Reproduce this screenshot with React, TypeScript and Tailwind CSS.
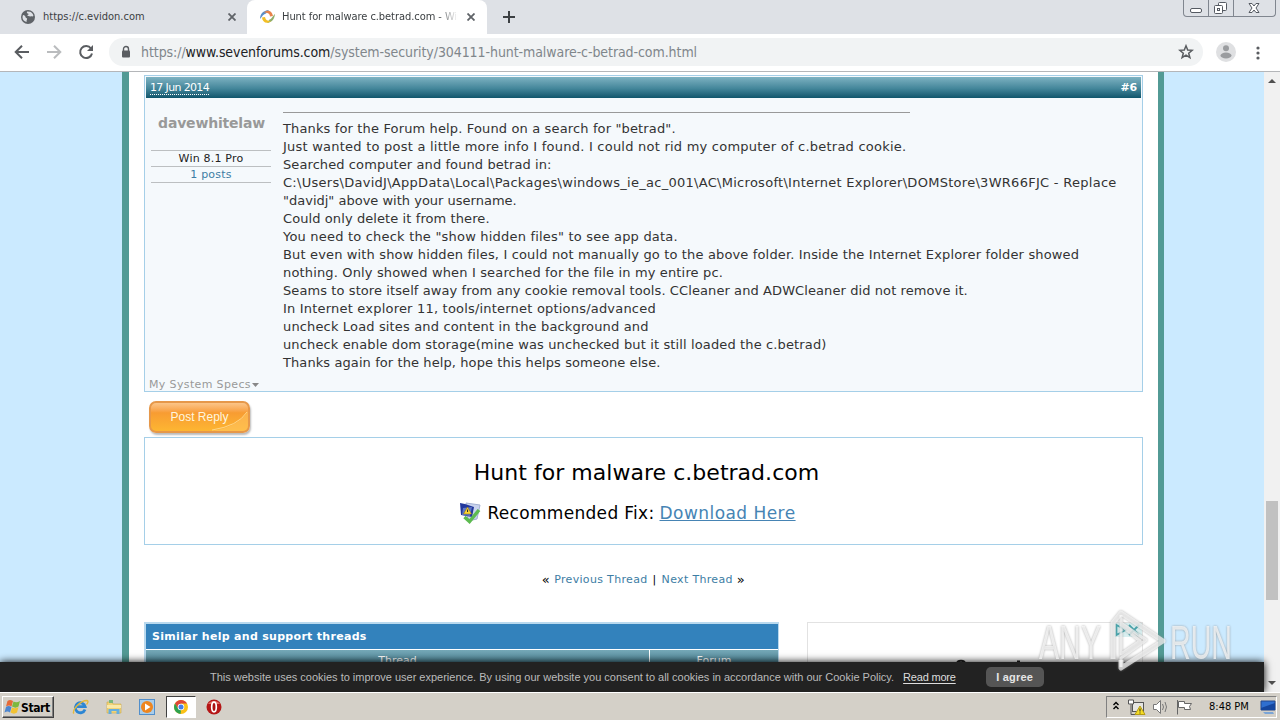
import type { ReactNode } from "react";
import clsx from "clsx";

const VERDANA = "font-[Verdana,'DejaVu_Sans',sans-serif]";
const TAHOMA = "font-['DejaVu_Sans_Condensed','DejaVu_Sans',sans-serif] [font-stretch:condensed]";
const ARIAL = "font-['Liberation_Sans',Arial,sans-serif]";

const postLines = [
  { text: 'Thanks for the Forum help. Found on a search for "betrad".', track: "tracking-[0.14px]" },
  { text: "Just wanted to post a little more info I found. I could not rid my computer of c.betrad cookie.", track: "tracking-[0.23px]" },
  { text: "Searched computer and found betrad in:", track: "tracking-[0.09px]" },
  { text: "C:\\Users\\DavidJ\\AppData\\Local\\Packages\\windows_ie_ac_001\\AC\\Microsoft\\Internet Explorer\\DOMStore\\3WR66FJC - Replace", track: "tracking-[0.28px]" },
  { text: '"davidj" above with your username.', track: "tracking-[0px]" },
  { text: "Could only delete it from there.", track: "tracking-[0.09px]" },
  { text: 'You need to check the "show hidden files" to see app data.', track: "tracking-[0.2px]" },
  { text: "But even with show hidden files, I could not manually go to the above folder. Inside the Internet Explorer folder showed", track: "tracking-[0.15px]" },
  { text: "nothing. Only showed when I searched for the file in my entire pc.", track: "tracking-[0.15px]" },
  { text: "Seams to store itself away from any cookie removal tools. CCleaner and ADWCleaner did not remove it.", track: "tracking-[0.09px]" },
  { text: "In Internet explorer 11, tools/internet options/advanced", track: "tracking-[0.2px]" },
  { text: "uncheck Load sites and content in the background and", track: "tracking-[0.15px]" },
  { text: "uncheck enable dom storage(mine was unchecked but it still loaded the c.betrad)", track: "tracking-[0.13px]" },
  { text: "Thanks again for the help, hope this helps someone else.", track: "tracking-[0.09px]" },
];

function CloseX() {
  return (
    <svg width="8" height="8" viewBox="0 0 8 8" stroke="#5f6368" strokeWidth="1.8">
      <path d="M0.5 0.5l7 7M7.5 0.5l-7 7" />
    </svg>
  );
}

function GlobeIcon() {
  return (
    <svg width="14" height="14" viewBox="0 0 14 14">
      <circle cx="7" cy="7" r="7" fill="#5f6368" />
      <path d="M2 5c1.500.4 2.500 1.200 2.600 2.200.1.800 1.300.6 1.500 1.500.1.800-.8 1.400-.5 3.300C3 11.500 1.400 9.500 1.500 7zM6.200 1.600l3 .2c1.800.8 3 2.300 3.200 4.200-1 .9-1.900.1-2.800.4-.9.200-1.600-.6-2.700-.3-.9-.3-.2-1.500.5-1.500.6-.2.2-1.100-.6-1.100-.9-.1-1.300-1.200-.6-1.900z" fill="#dee1e6" />
    </svg>
  );
}

function ForumIcon() {
  return (
    <svg width="17" height="16" viewBox="0 0 17 16">
      <path d="M1 10C1 5 4 1.500 10 1L7 4.500C4.500 5 3.500 7 1 10z" fill="#5b8fc7" />
      <path d="M5 3.500C8 .5 13 1 14 7l-3 .5C11 5 9 3.500 5 3.500z" fill="#e7834a" />
      <path d="M16 5c-.5 5-3 8.500-8 9l2.500-3.500C13 10 13.500 7 16 5z" fill="#8fae6a" />
      <path d="M12 12c-4 3.500-8.500 1.500-9-3.500L6 8c.5 3 2.500 4 6 4z" fill="#f2bf25" />
    </svg>
  );
}

function TabStrip() {
  return (
    <div className={clsx("flex h-[34px] bg-[#dee1e6] text-[11px] text-[#3c4043]", TAHOMA)}>
      <div className="flex w-[247px] items-center pl-[21px]">
        <GlobeIcon />
        <span className="mt-px ml-2 w-[185px] whitespace-nowrap">https://c.evidon.com</span>
        <CloseX />
      </div>
      <div className="flex w-[240px] items-center rounded-t-lg bg-white pl-3">
        <ForumIcon />
        <span className="mt-px ml-[6px] w-[176px] overflow-hidden tracking-[-0.06px] whitespace-nowrap [mask-image:linear-gradient(90deg,#000_88%,transparent)]">
          Hunt for malware c.betrad.com - Win
        </span>
        <span className="ml-[9px]">
          <CloseX />
        </span>
      </div>
      <div className="flex w-[44px] items-center justify-center">
        <svg width="12" height="12" viewBox="0 0 12 12" stroke="#3c4043" strokeWidth="2">
          <path d="M6 0v12M0 6h12" />
        </svg>
      </div>
      <div className="mr-[4px] ml-auto h-[17px] w-[93px] rounded-b border border-t-0 border-[#80868f]">
        <svg width="91" height="16" viewBox="0 0 91 16" fill="none" stroke="#555a62">
          <path d="M24.500 0v16M49.500 0v16" stroke="#80868f" />
          <rect x="6.500" y="8.500" width="11" height="4" rx="1.500" fill="#fff" />
          <rect x="34.500" y="2.500" width="8" height="8" rx="1" fill="#fff" />
          <rect x="30.500" y="5.500" width="8" height="8" rx="1" fill="#fff" />
          <rect x="33.500" y="8.500" width="2" height="2" />
          <path d="M65 3.500h3l2 2.500 2-2.500h3l-3 4.500 3 4.500h-3l-2-2.500-2 2.500h-3l3-4.500z" fill="#fff" />
        </svg>
      </div>
    </div>
  );
}

function Toolbar() {
  return (
    <div className="flex h-[38px] items-center border-b border-[#b4b6b9] bg-white pl-[14px]">
      <svg width="82" height="16" viewBox="0 0 82 16" fill="none" strokeWidth="2" className="-mt-px">
        <path d="M15 8H2M8 1.700L1.700 8 8 14.300" stroke="#5a5d61" />
        <path d="M33 8h13M40 1.700L46.300 8 40 14.300" stroke="#babcbe" />
        <path d="M77 4.500A6 6 0 1 0 78 9.500" stroke="#5a5d61" />
        <path d="M79 1v6h-6z" fill="#5a5d61" />
      </svg>
      <div className="-mt-px ml-[13px] flex h-[28px] w-[1094px] items-center rounded-full bg-[#f1f3f4] pl-[12px]">
        <svg width="10" height="14" viewBox="0 0 10 14" className="-mt-px">
          <path d="M2.500 6V4a2.500 2.500 0 0 1 5 0v2" fill="none" stroke="#5a5d61" strokeWidth="1.400" />
          <rect x="1" y="5.500" width="8" height="7" rx="1" fill="#5a5d61" />
        </svg>
        <span className={clsx("ml-[10px] text-sm tracking-[-0.075px] whitespace-nowrap text-[#80868b]", TAHOMA)}>
          https://<span className="text-[#202124]">www.sevenforums.com</span>/system-security/304111-hunt-malware-c-betrad-com.html
        </span>
        <svg width="16" height="16" viewBox="0 0 16 16" className="mr-[9px] ml-auto" fill="none" stroke="#5a5d61" strokeWidth="1.500">
          <path d="M8 1.800l1.700 4.200 4.500.3-3.500 2.900 1.200 4.500L8 11.200l-3.900 2.500 1.200-4.500L1.800 6.300l4.500-.3z" />
        </svg>
      </div>
      <svg width="20" height="20" viewBox="0 0 20 20" className="-mt-px ml-[13px]">
        <circle cx="10" cy="10" r="10" fill="#dfe0e2" />
        <circle cx="10" cy="6.200" r="3" fill="#9a9c9f" />
        <ellipse cx="10" cy="13.500" rx="5.500" ry="3" fill="#9a9c9f" />
      </svg>
      <svg width="4" height="14" viewBox="0 0 4 14" className="ml-[20px]" fill="#5a5d61">
        <circle cx="2" cy="2" r="1.600" />
        <circle cx="2" cy="7" r="1.600" />
        <circle cx="2" cy="12" r="1.600" />
      </svg>
    </div>
  );
}

function Post() {
  return (
    <div className="h-[317px] w-[999px] border border-[#a5cfe8] bg-[#f5f9fc]">
      <div className="mt-px ml-px flex h-[21px] w-[995px] items-center justify-between bg-linear-to-b from-[#7db2c2] via-[#43869a] via-55% to-[#0f566c] px-1 text-[11px] text-white">
        <span className="mt-px h-[14px] border-b border-dotted border-white leading-[14px] tracking-[-0.65px]">17 Jun 2014</span>
        <span className="mt-px font-bold tracking-[-0.2px]">#6</span>
      </div>
      <div className="flex">
        <div className="w-[138px] shrink-0 pt-[16px] pl-[6px] text-center">
          <div className="w-[121px] text-sm leading-[18px] font-bold tracking-[-0.2px] whitespace-nowrap text-[#999]">davewhitelaw</div>
          <div className="mt-[18px] w-[120px] border-y border-[#bcbfc1] text-[11px] leading-[15px] tracking-[0.2px] text-[#222]">Win 8.1 Pro</div>
          <div className="h-4 w-[120px] border-b border-[#bcbfc1] text-[11px] leading-[16px] tracking-[0.2px] text-[#3d7da4]">1 posts</div>
        </div>
        <div className="pt-[14px] text-[13px] text-[#333]">
          <div className="mb-[7px] h-px w-[627px] bg-[#999]" />
          {postLines.map((l) => (
            <p key={l.text} className={clsx("h-[18px] leading-[18px] whitespace-nowrap", l.track)}>
              {l.text}
            </p>
          ))}
        </div>
      </div>
      <div className="mt-[7px] flex items-center pl-1 text-[11px] leading-[12px] tracking-[0.36px] text-[#999]">
        <span>My System Specs</span>
        <svg width="7" height="4" viewBox="0 0 7 4" className="ml-px">
          <path d="M0 0h7L3.500 4z" fill="#888" />
        </svg>
      </div>
    </div>
  );
}

function PostReply() {
  return (
    <div
      className={clsx(
        "relative mt-[9px] ml-[5px] h-[32px] w-[101px] overflow-hidden rounded-[7px] border-2 border-[#e6984a] bg-linear-to-b from-[#fbc588] via-[#f89c32] via-35% to-[#fdb632] text-center text-xs leading-[28px] text-[#fff5df] shadow-[1px_2px_2px_#bbb]",
        ARIAL
      )}
    >
      <svg width="40" height="22" viewBox="0 0 40 22" className="absolute right-0 bottom-0" fill="none">
        <path d="M4 22Q30 18 40 2v20z" fill="#ffc765" fillOpacity="0.5" />
        <path d="M4 21Q30 17 39 3" stroke="#ffd587" />
      </svg>
      <span className="relative">Post Reply</span>
    </div>
  );
}

function FixIcon() {
  return (
    <svg width="22" height="22" viewBox="0 0 22 22">
      <path d="M7 1l14 2-3 14-9 2z" fill="#c9d3ee" stroke="#a3b1d2" />
      <path d="M1 1l5 1 9 3-2 10-11-2z" fill="#22389c" />
      <path d="M4 6l9-1-2 9-8-1z" fill="#6079c4" />
      <path d="M8.500 5l4 7H4.500z" fill="#ffd733" stroke="#8b6d13" strokeWidth="0.500" />
      <path d="M8.600 7.500v2.500" stroke="#222" />
      <path d="M5.500 15l5 4.500L20 8" fill="none" stroke="#5dbb50" strokeWidth="3.500" />
    </svg>
  );
}

function FixBox() {
  return (
    <div className="mt-[4px] h-[108px] w-[999px] border border-[#a5cfe8] pl-[6px] text-center text-black">
      <div className="pt-[21px] text-[22px] leading-[28px] tracking-[0.03px] whitespace-nowrap">Hunt for malware c.betrad.com</div>
      <div className="mr-[38px] flex items-center justify-center pt-[14px] text-[17px] leading-[24px] tracking-[0.31px] whitespace-nowrap">
        <FixIcon />
        <span className="ml-[6px]">Recommended Fix:</span>
        <span className="ml-[5px] tracking-[0.45px] text-[#4684b4] underline">Download Here</span>
      </div>
    </div>
  );
}

function Scrollbar() {
  return (
    <div className="flex w-4 flex-col items-center bg-[#f1f1f1]">
      <svg width="8" height="4" viewBox="0 0 8 4" className="mt-[7px]">
        <path d="M0 4h8L4 0z" fill="#505050" />
      </svg>
      <div className="mt-[418px] h-[99px] w-3 bg-[#c1c1c1]" />
      <svg width="8" height="4" viewBox="0 0 8 4" className="mt-auto mb-[7px]">
        <path d="M0 0h8L4 4z" fill="#505050" />
      </svg>
    </div>
  );
}

function SimilarThreads() {
  return (
    <div className="w-[635px] border-2 border-r border-[#b9d9ee]">
      <div className="h-[25px] bg-[#3382bc] pl-[6px] text-[11px] leading-[26px] font-bold tracking-[0.3px] text-white">Similar help and support threads</div>
      <div className="mt-px flex h-[30px] gap-px text-center text-[11px] leading-[21px] text-white">
        <div className="w-[503px] bg-linear-to-b from-[#76a9b8] to-[#12586d]">Thread</div>
        <div className="flex-1 bg-linear-to-b from-[#76a9b8] to-[#12586d]">Forum</div>
      </div>
    </div>
  );
}

function AdBox() {
  return (
    <div className="ml-[28px] h-[100px] w-[336px] border border-[#e2e2e2]">
      <svg width="334" height="40" viewBox="0 0 334 40" fill="none">
        <path d="M306 0h28v14h-28z" fill="#d9f0f1" />
        <path d="M308.500 2l9 5-9 5zM321 2l10 10M331 2l-10 10" stroke="#42a5ad" strokeWidth="1.800" />
        <path d="M149 39q4-2.500 8 0M209 38.500h3" stroke="#222" strokeWidth="2" />
      </svg>
    </div>
  );
}

function CookieBar() {
  return (
    <div className={clsx("absolute bottom-0 left-0 flex h-[30px] w-[1264px] items-center bg-[#222] pl-[210px] text-[11px] whitespace-nowrap text-[#bbb] shadow-[0_0_8px_#000]", ARIAL)}>
      <span className="tracking-[-0.008px]">This website uses cookies to improve user experience. By using our website you consent to all cookies in accordance with our Cookie Policy.</span>
      <span className="ml-[9px] tracking-[-0.2px] text-[#ddd] underline underline-offset-2">Read more</span>
      <span className="ml-[30px] h-5 w-[58px] rounded-[5px] bg-[#555] text-center leading-5 font-bold tracking-[0.2px] text-[#e5e5e5]">I agree</span>
    </div>
  );
}

function Watermark() {
  return (
    <svg width="210" height="66" viewBox="0 0 210 66" className="absolute top-[536px] left-[1037px] [filter:drop-shadow(0_0_1px_#888)]">
      <g fill="#fff" fillOpacity="0.7" fontFamily="'Liberation Sans'" fontSize="48">
        <text x="2" y="51" textLength="62" lengthAdjust="spacingAndGlyphs">ANY</text>
        <text x="133" y="51" textLength="62" lengthAdjust="spacingAndGlyphs">RUN</text>
      </g>
      <g fill="none" stroke="#fff" strokeOpacity="0.65" strokeWidth="5" strokeLinejoin="round">
        <path d="M76 51V15l8-10 42 28-42 27v-8" />
        <path d="M84 17v29l19-13zM84 7v8l25 17-25 18v9" strokeWidth="3" />
      </g>
    </svg>
  );
}

function Page() {
  return (
    <div className={clsx("relative flex h-[620px] overflow-hidden", VERDANA)}>
      <div className="flex flex-1 justify-center bg-[#cbeaff] pl-[22px]">
        <div className="w-[1042px] border-r-[6px] border-l-[7px] border-[#529a95] bg-white pt-[3px] pl-[15px]">
          <Post />
          <PostReply />
          <FixBox />
          <div className="mt-[27px] mb-[34px] flex h-[16px] w-[999px] justify-center gap-[5px] text-[11px] leading-[16px] tracking-[0.33px] text-[#3d7da4]">
            <span className="text-[13px] text-black">«</span>
            <span className="-ml-px">Previous Thread</span>
            <span className="text-black">|</span>
            <span>Next Thread</span>
            <span className="-ml-px text-[13px] text-black">»</span>
          </div>
          <div className="flex">
            <SimilarThreads />
            <AdBox />
          </div>
        </div>
      </div>
      <Scrollbar />
      <CookieBar />
      <Watermark />
    </div>
  );
}

function WindowsFlag() {
  return (
    <svg width="17" height="16" viewBox="0 0 16 16">
      <path d="M3 2c2-1.500 3-1.500 5.500 0L7 7.500C5 6 4 6 1.500 7.500z" fill="#e66a37" />
      <path d="M9 2.500c2 1 4 1 6.500-.5L14 7.500c-2 1.500-4 1.500-6.500 0z" fill="#7db83f" />
      <path d="M1.500 8c2-1.500 3-1.500 5.500 0l-1.500 5.500c-2-1.500-3-1.500-5.500 0z" fill="#4d86cf" />
      <path d="M7.500 8.500c2 1 4 1 6.500-.5L12.500 13.500c-2 1.500-4 1.500-6.500 0z" fill="#f2c232" />
    </svg>
  );
}

function QuickItem({ active, children }: { active?: boolean; children: ReactNode }) {
  return (
    <div
      className={clsx(
        "flex h-[22px] w-[30px] items-center justify-center",
        active && "border border-t-[#404040] border-r-white border-b-white border-l-[#404040] bg-white"
      )}
    >
      {children}
    </div>
  );
}

function Taskbar() {
  return (
    <div className={clsx("flex h-7 items-center border-t border-white bg-[#d4d0c8] pl-[2px] text-[11px] text-black", TAHOMA)}>
      <div className="flex h-[22px] w-[52px] items-center border border-t-white border-r-[#404040] border-b-[#404040] border-l-white pl-px shadow-[inset_-1px_-1px_#808080]">
        <WindowsFlag />
        <span className="mt-[2px] text-[12px] font-bold tracking-[-0.4px]">Start</span>
      </div>
      <div className="ml-[11px] flex gap-[3.6px]">
        <QuickItem>
          <svg width="17" height="16" viewBox="0 0 17 16" fill="none">
            <path d="M13 10.500A5 5 0 1 1 13.200 7.700H5" stroke="#2d86d3" strokeWidth="2.800" />
            <path d="M2 14.500C-1 12 8 1.500 15 1.500c2 .5.500 3-.5 4" stroke="#e5b93a" strokeWidth="1.300" />
          </svg>
        </QuickItem>
        <QuickItem>
          <svg width="16" height="16" viewBox="0 0 16 16">
            <path d="M1 3h5l1 2h8v9H1z" fill="#f2d377" stroke="#cba849" strokeWidth="0.600" />
            <path d="M3 1h4v3H3z" fill="#7ab77b" />
            <path d="M1 6h14v3H1z" fill="#fae9a8" />
            <path d="M2.500 15v-5h11v5h-3v-3h-5v3z" fill="#65aede" />
          </svg>
        </QuickItem>
        <QuickItem>
          <svg width="16" height="16" viewBox="0 0 16 16">
            <rect x="0.500" y="0.500" width="15" height="15" fill="#a9cdea" stroke="#528fcb" />
            <circle cx="8" cy="8" r="6" fill="#ee8620" />
            <path d="M6 4.500v7L11.500 8z" fill="#fff" />
          </svg>
        </QuickItem>
        <QuickItem active>
          <svg width="14" height="14" viewBox="0 0 14 14">
            <circle cx="7" cy="7" r="7" fill="#fbc116" />
            <path d="M1 3.500A7 7 0 0 1 13 3.500H7L4 8.500z" fill="#df4637" />
            <path d="M1 3.500l3.200 5.200L7 10.500 6.500 14A7 7 0 0 1 1 3.500z" fill="#2da14f" />
            <circle cx="7" cy="7" r="3.300" fill="#fff" />
            <circle cx="7" cy="7" r="2.500" fill="#447ee8" />
          </svg>
        </QuickItem>
        <QuickItem>
          <svg width="16" height="16" viewBox="0 0 16 16">
            <circle cx="8" cy="8" r="7.500" fill="#b51616" />
            <path d="M2 5a7 6 0 0 1 12 0z" fill="#e36a63" />
            <ellipse cx="8" cy="8" rx="2.300" ry="4.800" fill="#a11" stroke="#fff" strokeWidth="1.700" />
          </svg>
        </QuickItem>
      </div>
      <div className="mr-[3px] ml-auto flex h-[22px] w-[171px] items-center border border-t-[#808080] border-r-white border-b-white border-l-[#808080] pl-[5px]">
        <svg width="80" height="18" viewBox="0 0 80 18" fill="none">
          <path d="M1.500 7L4 4.500 6.500 7M1.500 11L4 8.500 6.500 11" stroke="#000" strokeWidth="1.400" />
          <rect x="20.500" y="4.500" width="11" height="9" fill="#e5e5e2" stroke="#555" />
          <path d="M16.500 2v4h5V2z" fill="#fff" stroke="#555" />
          <path d="M19 6.500v10h4" stroke="#555" />
          <path d="M28 8l5 8.500H23z" fill="#f5dc24" stroke="#b59b16" />
          <path d="M28 10.500v3M28 14.500v1" stroke="#222" />
          <path d="M41.500 6.500h3l4-4v13l-4-4h-3z" fill="#fff" stroke="#777" />
          <path d="M50.500 6q2 3 0 6M53 4q3 5 0 10" stroke="#777" />
          <path d="M66.500 3.500h6v2h7l-2 3 1 3h-6v-2h-6z" fill="#fff" stroke="#666" />
          <path d="M65.500 2v14.500" stroke="#666" />
        </svg>
        <span className="mt-[2px] ml-[17px] whitespace-nowrap">8:48 PM</span>
        <svg width="16" height="14" viewBox="0 0 16 14" className="ml-auto">
          <path d="M1 1h14v9H1z" fill="#2f6fd0" stroke="#25488c" />
          <path d="M1 8L15 3v7H1z" fill="#15469e" />
          <path d="M3 12h10l1 2H5z" fill="#7ba5d6" />
        </svg>
      </div>
    </div>
  );
}

export default function App() {
  return (
    <div className="h-[720px] w-[1280px] overflow-hidden bg-white">
      <TabStrip />
      <Toolbar />
      <Page />
      <Taskbar />
    </div>
  );
}
